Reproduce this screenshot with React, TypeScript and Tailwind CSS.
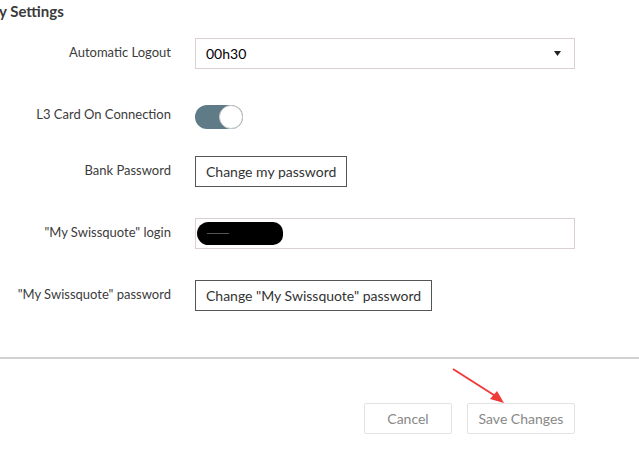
import React from 'react';

function Row({ label, children, labelClass = '' }: { label: string; children: React.ReactNode; labelClass?: string }) {
  return (
    <div className="flex items-center">
      <div className={`w-[171px] shrink-0 text-right text-[13px] text-[#3c3c3c] ${labelClass}`}>{label}</div>
      <div className="ml-[24px] flex items-center">{children}</div>
    </div>
  );
}

export default function App() {
  return (
    <div
      className="relative w-[639px] h-[461px] overflow-hidden bg-white"
      style={{ fontFamily: 'Lato, "Open Sans", sans-serif' }}
    >
      <h2 className="ml-[-1px] pt-[1px] text-[15px] font-bold leading-[20px] text-[#3a3a3a]">y Settings</h2>

      <div className="mt-[17px] flex flex-col">
        <Row label="Automatic Logout" labelClass="relative -top-[1px]">
          <div className="flex h-[31px] w-[380px] items-center justify-between border border-[#dccfcf] pl-[10px] pr-[13px] text-[14px] text-black">
            <span>00h30</span>
            <svg width="7" height="5" viewBox="0 0 7 5">
              <path d="M0 0 L7 0 L3.5 5 Z" fill="#222" />
            </svg>
          </div>
        </Row>

        <div className="mt-[36px] h-[24px]">
          <Row label="L3 Card On Connection" labelClass="relative -top-[3px] leading-[16px]">
            <div className="relative h-[24px] w-[48px] rounded-full bg-[#5f7b87]">
              <div className="absolute right-0 top-0 h-[24px] w-[24px] rounded-full border border-[#c8c8c8] bg-white" />
            </div>
          </Row>
        </div>

        <div className="mt-[27px]">
          <Row label="Bank Password" labelClass="relative -top-[1px]">
            <button className="h-[31px] border border-[#555] px-[10px] text-[14px] text-[#333]">Change my password</button>
          </Row>
        </div>

        <div className="mt-[31px]">
          <Row label={'"My Swissquote" login'} labelClass="relative -top-[1px]">
            <div className="flex h-[31px] w-[380px] items-center border border-[#dccfcf] pl-[1px]">
              <div className="relative h-[23px] w-[86px] rounded-[12px] rounded-l-[14px] bg-black">
                <div className="absolute left-[10px] top-[11px] h-[1px] w-[22px] bg-[#555]" />
              </div>
            </div>
          </Row>
        </div>

        <div className="mt-[31px]">
          <Row label={'"My Swissquote" password'} labelClass="relative -top-[1px]">
            <button className="h-[31px] border border-[#555] px-[10px] text-[14px] text-[#333]">
              Change "My Swissquote" password
            </button>
          </Row>
        </div>
      </div>

      <div className="mt-[46px] h-[2px] w-full bg-[#d2d2d2]" />

      <div className="mt-[44px] flex justify-end gap-[15px] pr-[64px]">
        <button className="h-[31px] w-[88px] rounded-[2px] border border-[#e2e2e2] text-[14px] text-[#888]">Cancel</button>
        <button className="h-[31px] w-[108px] rounded-[2px] border border-[#e2e2e2] text-[14px] text-[#888]">Save Changes</button>
      </div>

      <svg className="absolute left-0 top-0" width="639" height="461" viewBox="0 0 639 461">
        <line x1="453" y1="369" x2="497" y2="397" stroke="#f03a3a" strokeWidth="2" />
        <path d="M504 403 L490 399 L497 391 Z" fill="#f03a3a" />
      </svg>
    </div>
  );
}
